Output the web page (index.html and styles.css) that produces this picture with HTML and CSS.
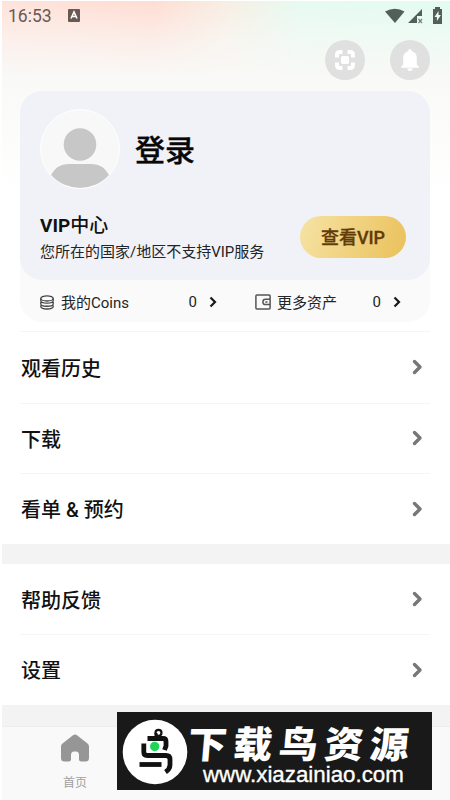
FILE: index.html
```html
<!DOCTYPE html>
<html lang="zh-CN">
<head>
<meta charset="utf-8">
<title>我的</title>
<link rel="stylesheet" href="styles.css">
</head>
<body>
<div class="screen">
  <header class="status">
    <span class="time">16:53</span>
    <svg class="ime" width="12" height="13" viewBox="0 0 12 13"><rect width="12" height="13" rx="1" fill="#6a5852"/><path d="M3 9.500 6 3l3 6.500M4 7.500h4" fill="none" stroke="#fff" stroke-width="1.600"/></svg>
    <svg class="signals" width="58" height="18" viewBox="0 0 58 18">
      <g fill="#53605a"><path d="M0 4.500Q10 -1 19.500 4.500L10 16Z"/><path d="M23 16 37 2v7h-5v7Z"/><path d="M48 2h2V0h5v2h2v15h-9Z"/></g>
      <path d="m33.500 12 3.500 4m0-4-3.500 4" stroke="#777f7a" stroke-width="1.200"/><path d="m53.500 4-4 6h2.400v4l4-6h-2.400Z" fill="#f0fbf5"/>
    </svg>
  </header>
  <div class="actions">
    <svg width="40" height="40" viewBox="0 0 40 40"><circle cx="20" cy="20" r="20" fill="#dfe0df"/><g fill="none" stroke="#fff" stroke-width="4"><path d="M12 17.500V15q0-3 3-3h2.500M22.500 12H25q3 0 3 3v2.500M28 22.500V25q0 3-3 3h-2.500M17.500 28H15q-3 0-3-3v-2.500"/></g><rect x="16" y="16" width="8" height="8" rx="1.500" fill="#fff"/></svg>
    <svg width="40" height="40" viewBox="0 0 40 40"><circle cx="20" cy="20" r="20" fill="#dfe0df"/><path d="M20 9c1 0 1.600.8 1.600 2 3.400 1 5.200 3.600 5.200 7v6.500l2 2v1.300H11.200v-1.300l2-2V18c0-3.400 1.800-6 5.200-7 0-1.200.6-2 1.600-2Zm-3 19.500h6Q22 31 20 31t-3-2.500Z" fill="#fff"/></svg>
  </div>
  <section class="account">
    <div class="profile">
      <div class="person">
        <svg width="80" height="80" viewBox="0 0 80 80"><circle cx="40" cy="40" r="39.500" fill="#f8f8f8" stroke="#fff"/><circle cx="40" cy="35.500" r="16.300" fill="#c7c7c7"/><path d="M11 66Q17 55 28 55h24q11 0 17 11A39 39 0 0 1 11 66Z" fill="#c7c7c7"/></svg>
        <h1>登录</h1>
      </div>
      <div class="vip">
        <div><h2>VIP<span>中心</span></h2><p>您所在的国家/地区不支持VIP服务</p></div>
        <button>查看VIP</button>
      </div>
    </div>
    <div class="assets">
      <div class="asset coins">
        <svg width="14" height="15" viewBox="0 0 14 15" fill="none" stroke="#444" stroke-width="1.300"><ellipse cx="7" cy="3.400" rx="6.200" ry="2.600"/><path d="M.8 3.500v2.300C.8 9 13.200 9 13.200 5.800V3.500M.8 7v2C.8 12 13.200 12 13.200 9V7M.8 10.500v1c0 3.300 12.400 3.300 12.400 0v-1"/></svg>
        <span>我的Coins</span><b>0</b>
        <svg class="mini" width="8" height="12" viewBox="0 0 8 12"><path d="m1.500 1.500 4.500 4.500-4.500 4.500"/></svg>
      </div>
      <div class="asset wallet">
        <svg width="16" height="16" viewBox="0 0 16 16" fill="none" stroke="#555" stroke-width="1.500"><rect x=".9" y=".9" width="14.200" height="14.200" rx="1"/><path d="M15 5.300H10.500a2.600 2.600 0 0 0 0 5.200H15M10.300 7.900h2.200"/></svg>
        <span>更多资产</span><b>0</b>
        <svg class="mini" width="8" height="12" viewBox="0 0 8 12"><path d="m1.500 1.500 4.500 4.500-4.500 4.500"/></svg>
      </div>
    </div>
  </section>
  <ul class="list first">
    <li><span>观看历史</span><svg class="chev" width="11" height="16" viewBox="0 0 11 16"><path d="m2.500 2.500 5.500 5.500-5.500 5.500"/></svg></li>
    <li><span>下载</span><svg class="chev" width="11" height="16" viewBox="0 0 11 16"><path d="m2.500 2.500 5.500 5.500-5.500 5.500"/></svg></li>
    <li><span>看单 &amp; 预约</span><svg class="chev" width="11" height="16" viewBox="0 0 11 16"><path d="m2.500 2.500 5.500 5.500-5.500 5.500"/></svg></li>
  </ul>
  <div class="band"></div>
  <ul class="list">
    <li><span>帮助反馈</span><svg class="chev" width="11" height="16" viewBox="0 0 11 16"><path d="m2.500 2.500 5.500 5.500-5.500 5.500"/></svg></li>
    <li><span>设置</span><svg class="chev" width="11" height="16" viewBox="0 0 11 16"><path d="m2.500 2.500 5.500 5.500-5.500 5.500"/></svg></li>
  </ul>
  <div class="band last"></div>
  <nav>
    <div class="home">
      <svg width="28" height="28" viewBox="0 0 28 28"><path d="M12 1.200q2-1.600 4 0l10.500 8.300Q28 10.700 28 12.500V24q0 3.500-3.500 3.500H20q-2 0-2-2V21q0-3.500-3-3.500h-2q-3 0-3 3.500v4.500q0 2-2 2H3.500Q0 27.500 0 24V12.500Q0 10.700 1.500 9.500Z" fill="#969696"/></svg>
      <span>首页</span>
    </div>
  </nav>
  <aside class="promo">
    <svg width="66" height="66" viewBox="0 0 66 66"><circle cx="33" cy="33" r="32.300" fill="#fff"/><g fill="none" stroke="#111" stroke-width="4.800"><circle cx="36.500" cy="13.800" r="3" stroke-width="2.200"/><path d="M34 14v5" stroke-width="3"/><path d="M25.500 19.500H41q3 0 3 3V27l-1.500 4"/><path d="M21.800 24.500V33q0 3.500 3.500 3.500H44q4 0 4 4V46q0 4-4.500 7"/><path d="M17.500 45.500H39.500"/></g><circle cx="32.700" cy="27.500" r="4.700" fill="#20d45a"/></svg>
    <div class="promo-text"><strong>下载鸟资源</strong><span>www.xiazainiao.com</span></div>
  </aside>
</div>
</body>
</html>
```

FILE: styles.css
```css
* { box-sizing: border-box; }
body { margin: 0; font-family: Roboto, "Noto Sans CJK SC", sans-serif; color: #111; }
h1, h2, p, ul { margin: 0; padding: 0; }
svg { display: block; flex: none; }
.screen {
  position: relative; width: 450px; height: 800px; overflow: hidden;
  border-left: 2px solid #fff; border-top: 1px solid #fff;
  background:
    linear-gradient(to bottom, rgba(249,249,247,0) 0, rgba(249,249,247,.6) 40px, #f9f9f7 76px, #fff 190px),
    linear-gradient(to right, #ffe3db 0, #ffddd3 34%, #f7eee4 50%, #e6faf0 66%, #e2fcf0 100%);
}
.status { height: 38px; display: flex; align-items: flex-start; padding: 5px 6px 0; }
.time { width: 60px; font-size: 17.500px; line-height: 20px; color: #6a5852; }
.ime { margin-top: 3px; }
.signals { margin-left: auto; margin-right: 1px; margin-top: 1px; }
.actions { display: flex; justify-content: flex-end; gap: 25px; padding: 1px 20px 0 0; height: 52px; }
.account { margin: 0 20px 0 18px; height: 231px; background: #fafafa; border-radius: 22px; }
.profile { height: 189px; padding: 18px 24px 0 20px; background: #f1f2f8; border-radius: 22px; }
.person { display: flex; align-items: center; gap: 15px; height: 80px; }
h1 { font-size: 30px; line-height: 40px; font-weight: 500; color: #080808; padding-top: 3px; -webkit-text-stroke: .35px #080808; }
.vip { display: flex; justify-content: space-between; padding-top: 24px; }
h2 { font-size: 19px; line-height: 26px; font-weight: 700; }
h2 span { font-weight: 500; }
.vip p { font-size: 15px; line-height: 26px; white-space: nowrap; color: #242424; }
button { width: 106px; height: 42px; margin-top: 3px; padding: 0; border: 0; border-radius: 21px; background: linear-gradient(110deg, #f6e3a5, #eac15a); color: #613b08; font: 500 18px/43px Roboto, "Noto Sans CJK SC", sans-serif; -webkit-text-stroke: .3px #613b08; }
.assets { display: flex; height: 42px; align-items: center; padding: 2px 29px 0 20px; gap: 38px; font-size: 15px; }
.asset { display: flex; align-items: center; color: #242424; }
.asset b { margin-left: auto; font-weight: 400; }
.coins { width: 177px; }
.wallet { flex: 1; }
.asset span { position: relative; top: -1px; }
.coins span { margin-left: 7px; }
.wallet span { margin-left: 6px; }
.mini { margin-left: 12px; }
.mini path { fill: none; stroke: #191919; stroke-width: 2.200; }
.list { list-style: none; padding: 0 20px 0 18px; background: #fff; }
.first { margin-top: 9px; }
.first li:first-child { height: 71.500px; }
.list li { height: 70.500px; display: flex; align-items: center; justify-content: space-between; padding: 0 7px 0 1px; border-top: 1px solid #f5f5f5; font-size: 20px; font-weight: 500; }
.list:not(.first) li:first-child { border-top-color: transparent; }
.chev path { fill: none; stroke: #777; stroke-width: 3.400; stroke-linecap: round; stroke-linejoin: round; }
.band { height: 20px; background: #f3f3f3; }
.last { height: 21px; }
nav { height: 75px; display: flex; background: #f9f9f9; border-top: 1px solid #ededed; }
.home { width: 146px; display: flex; flex-direction: column; align-items: center; padding-top: 7px; font-size: 12px; color: #a0a0a0; }
.home span { margin-top: 12px; line-height: 18px; }
.promo { position: absolute; left: 115px; top: 711px; width: 315px; height: 78px; display: flex; background: #191919; color: #fff; padding: 7px 0 0 5px; }
.promo-text { display: flex; flex-direction: column; margin-top: 4px; }
.promo strong { font: 900 39px/39px "Noto Sans CJK SC", sans-serif; letter-spacing: 6.500px; white-space: nowrap; transform: skewX(-5deg) scaleY(.95); }
.promo-text span { font: 22.300px/26px "Liberation Sans", sans-serif; padding-left: 15px; -webkit-text-stroke: .35px #fff; }
```
